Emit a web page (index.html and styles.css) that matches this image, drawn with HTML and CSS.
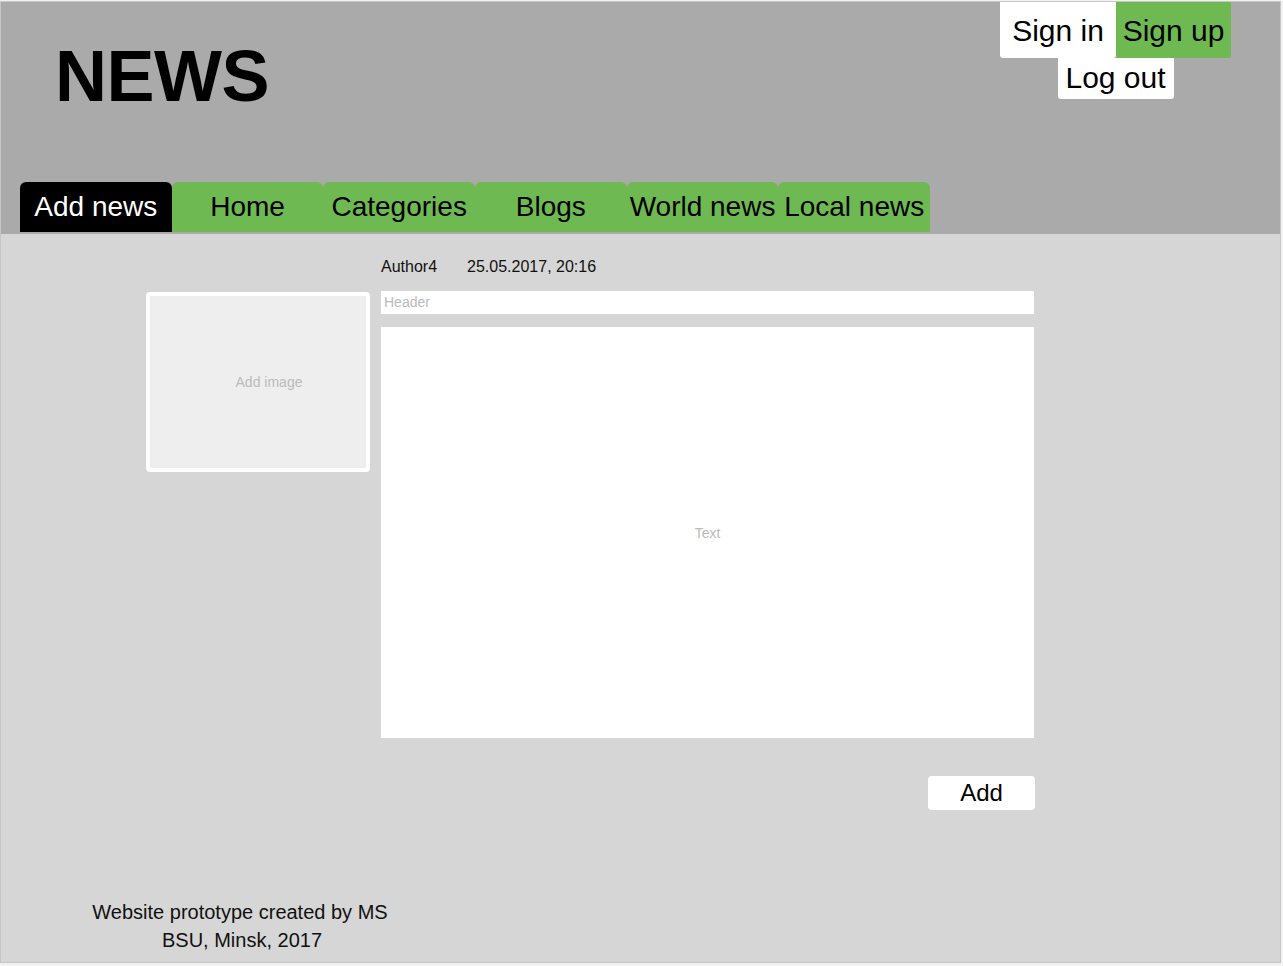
FILE: index.html
```html
<!DOCTYPE html>
<html lang="en">
<head>
<meta charset="utf-8">
<title>NEWS - Add news</title>
<link rel="stylesheet" href="styles.css">
</head>
<body>
<div class="page">
  <header class="header">
    <div class="header-top">
      <h1 class="logo">NEWS</h1>
      <div class="auth">
        <div class="auth-row">
          <a class="auth-btn auth-signin" href="#">Sign in</a>
          <a class="auth-btn auth-signup" href="#">Sign up</a>
        </div>
        <a class="auth-btn auth-logout" href="#">Log out</a>
      </div>
    </div>
    <nav class="nav">
      <a class="tab tab-active" href="#">Add news</a>
      <a class="tab" href="#">Home</a>
      <a class="tab" href="#">Categories</a>
      <a class="tab" href="#">Blogs</a>
      <a class="tab" href="#">World news</a>
      <a class="tab" href="#">Local news</a>
    </nav>
  </header>
  <section class="content">
    <div class="editor">
      <div class="image-col">
        <div class="image-box">Add image</div>
      </div>
      <div class="form-col">
        <div class="meta">
          <span class="author">Author4</span>
          <span class="date">25.05.2017, 20:16</span>
        </div>
        <div class="field-header">Header</div>
        <div class="field-text">Text</div>
        <div class="actions">
          <button class="add-btn" type="button">Add</button>
        </div>
      </div>
    </div>
    <footer class="footer">
      <div class="footer-line1">Website prototype created by MS</div>
      <div>BSU, Minsk, 2017</div>
    </footer>
  </section>
</div>
</body>
</html>
```

FILE: styles.css
```css
html, body {
  margin: 0;
  padding: 0;
}

body {
  background: #f2f2f2;
  font-family: "Liberation Sans", Arial, sans-serif;
  color: #000;
}

.page {
  width: 1279px;
  margin-top: 1px;
  border: 1px solid #c6c6c6;
}

.header {
  background: #aaaaaa;
  height: 232px;
  display: flex;
  flex-direction: column;
}

.header-top {
  height: 180px;
  display: flex;
  justify-content: space-between;
  align-items: flex-start;
}

.logo {
  margin: 38px 0 0 54px;
  font-family: "Liberation Sans", Arial, sans-serif;
  font-weight: bold;
  font-size: 72px;
  line-height: 72px;
  letter-spacing: -0.5px;
}

.auth {
  display: flex;
  flex-direction: column;
  align-items: center;
  margin-right: 49px;
}

.auth-row {
  display: flex;
}

.auth-btn {
  display: block;
  width: 116px;
  text-align: center;
  font-size: 30px;
  line-height: 34px;
  color: #000;
  text-decoration: none;
  background: #ffffff;
  border-radius: 0 0 3px 3px;
}

.auth-signin,
.auth-signup {
  padding: 12px 0 10px;
}

.auth-signup {
  width: 115px;
  background: #6fb952;
}

.auth-logout {
  padding: 3px 0 4px;
}

.nav {
  display: flex;
  width: 910px;
  margin-left: 19px;
}

.tab {
  flex: 1 1 0;
  display: block;
  height: 50px;
  box-sizing: border-box;
  padding-top: 9px;
  text-align: center;
  font-size: 28px;
  line-height: 32px;
  color: #000;
  text-decoration: none;
  background: #6fb952;
  border-radius: 6px 6px 0 0;
  white-space: nowrap;
}

.tab-active {
  background: #000;
  color: #fff;
}

.content {
  background: #d6d6d6;
  padding-bottom: 8px;
}

.editor {
  display: flex;
  gap: 11px;
  padding-left: 145px;
}

.image-col {
  padding-top: 58px;
}

.image-box {
  width: 194px;
  height: 172px;
  padding-left: 22px;
  border: 4px solid #ffffff;
  border-radius: 4px;
  background: #eeeeee;
  display: flex;
  align-items: center;
  justify-content: center;
  font-size: 14px;
  color: #bbbbbb;
}

.form-col {
  width: 653px;
  padding-top: 23px;
}

.meta {
  display: flex;
  gap: 30px;
  font-size: 16px;
  line-height: 19px;
  color: #111;
}

.field-header {
  margin-top: 15px;
  height: 23px;
  background: #ffffff;
  padding-left: 3px;
  font-size: 14px;
  line-height: 23px;
  color: #bbbbbb;
}

.field-text {
  margin-top: 13px;
  height: 411px;
  background: #ffffff;
  display: flex;
  align-items: center;
  justify-content: center;
  font-size: 14px;
  color: #bbbbbb;
}

.actions {
  display: flex;
  justify-content: flex-end;
  margin-top: 38px;
  margin-right: -1px;
}

.add-btn {
  width: 107px;
  height: 34px;
  border: none;
  border-radius: 4px;
  background: #ffffff;
  font-family: "Liberation Sans", Arial, sans-serif;
  font-size: 24px;
  line-height: 28px;
  color: #000;
  padding: 0;
}

.footer {
  margin-top: 88px;
  width: 482px;
  text-align: center;
  font-size: 20px;
  line-height: 28px;
  color: #111;
}

.footer-line1 {
  padding-right: 4px;
}
```
